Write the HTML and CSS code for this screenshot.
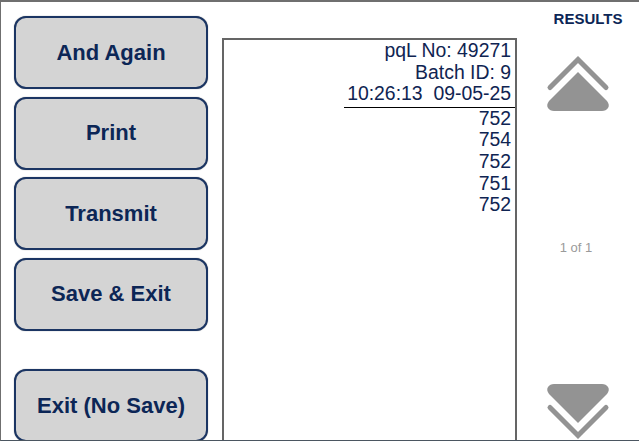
FILE: index.html
```html
<!DOCTYPE html>
<html>
<head>
<meta charset="utf-8">
<link rel="stylesheet" href="styles.css">
</head>
<body>
<div class="screen">
  <div class="actions">
    <div class="btn">And Again</div>
    <div class="btn">Print</div>
    <div class="btn">Transmit</div>
    <div class="btn">Save &amp; Exit</div>
    <div class="btn btn-exit">Exit (No Save)</div>
  </div>
  <div class="panel">
    <div class="header">
      <div class="line">pqL No: 49271</div>
      <div class="line">Batch ID: 9</div>
      <div class="line">10:26:13&nbsp;&nbsp;09-05-25</div>
    </div>
    <div class="values">
      <div class="line">752</div>
      <div class="line">754</div>
      <div class="line">752</div>
      <div class="line">751</div>
      <div class="line">752</div>
    </div>
  </div>
  <div class="side">
    <div class="title">RESULTS</div>
    <svg class="arrow arrow-up" width="64" height="58" viewBox="0 0 64 58">
      <polyline points="4,33.5 32,5.5 60,33.5" fill="none" stroke="#939393" stroke-width="5" stroke-linejoin="miter" stroke-linecap="round"/>
      <path d="M32,18 L61,47 Q64,51 62,54 Q60,57 56,57 L8,57 Q4,57 2,54 Q0,51 3,47 Z" fill="#939393"/>
    </svg>
    <div class="pager">1 of 1</div>
    <svg class="arrow arrow-down" width="64" height="58" viewBox="0 0 64 58">
      <polyline points="4,24.5 32,52.5 60,24.5" fill="none" stroke="#939393" stroke-width="5" stroke-linejoin="miter" stroke-linecap="round"/>
      <path d="M32,40 L61,11 Q64,7 62,4 Q60,1 56,1 L8,1 Q4,1 2,4 Q0,7 3,11 Z" fill="#939393"/>
    </svg>
  </div>
</div>
</body>
</html>
```
FILE: styles.css
```css
html, body {
  margin: 0;
  padding: 0;
  background: #ffffff;
}
.screen {
  box-sizing: border-box;
  width: 639px;
  height: 441px;
  border-top: 2px solid #6f6f6f;
  border-left: 1px solid #6f6f6f;
  border-bottom: 1px solid #4b5661;
  display: flex;
  overflow: hidden;
  font-family: "Liberation Sans", Arial, sans-serif;
}
.actions {
  display: flex;
  flex-direction: column;
  gap: 7.5px;
  padding-left: 13px;
  padding-top: 14px;
  flex: none;
}
.btn {
  box-sizing: border-box;
  width: 194px;
  height: 73px;
  flex: none;
  background: #d4d4d4;
  border: 2px solid #1b3563;
  border-radius: 12px;
  box-shadow: 0 0 1px #7a7a7a;
  display: flex;
  align-items: center;
  justify-content: center;
  font-weight: bold;
  font-size: 22px;
  color: #0c2656;
}
.btn-exit {
  margin-top: 31px;
}
.panel {
  box-sizing: border-box;
  flex: none;
  width: 295px;
  height: 420px;
  margin-left: 14px;
  margin-top: 36px;
  border: 2px solid #656565;
  display: flex;
  flex-direction: column;
  align-items: flex-end;
  font-size: 19.4px;
  line-height: 21.7px;
  color: #0f2452;
}
.header {
  width: 171px;
  box-sizing: border-box;
  padding-right: 4px;
  padding-bottom: 1.5px;
  border-bottom: 1.5px solid #000000;
  text-align: right;
}
.values {
  padding-right: 4px;
  text-align: right;
}
.line {
  white-space: nowrap;
}
.side {
  flex: 1;
  display: flex;
  flex-direction: column;
  align-items: center;
}
.title {
  font-weight: bold;
  font-size: 15px;
  color: #0c2656;
  margin-top: 8px;
  margin-left: 20px;
}
.arrow {
  display: block;
  flex: none;
}
.arrow-up {
  margin-top: 27px;
}
.pager {
  font-size: 13px;
  color: #9a9a9a;
  margin-top: 128px;
  margin-left: -4px;
}
.arrow-down {
  margin-top: auto;
  margin-bottom: -1px;
}
```
